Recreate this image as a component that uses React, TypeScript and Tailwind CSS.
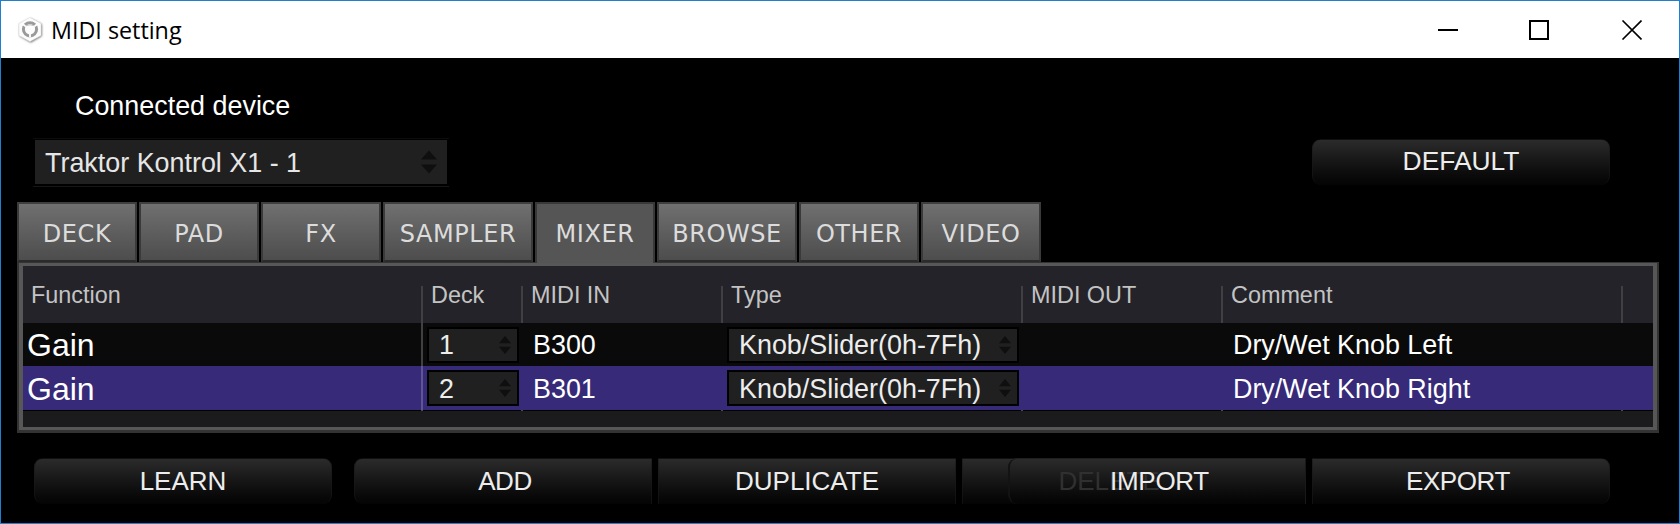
import React from "react";

const sans = "font-['Liberation_Sans',Arial,sans-serif]";

function AppIcon() {
  return (
    <svg width="30" height="30" viewBox="0 0 30 30" className="shrink-0">
      <defs>
        <filter id="soft" x="-20%" y="-20%" width="140%" height="140%">
          <feGaussianBlur stdDeviation="1.1" />
        </filter>
      </defs>
      <path d="M15.7 3.5 L26.7 9.3 V21 L15.7 27.5 L4.7 21 V9.3 Z" fill="#606060" filter="url(#soft)" />
      <path d="M15 2.5 L26 8.5 V20.5 L15 26.5 L4 20.5 V8.5 Z" fill="#fcfcfc" stroke="#e0e0e0" strokeWidth="0.6" />
      <circle cx="15" cy="14.3" r="6.6" fill="none" stroke="#9a9a9a" strokeWidth="3" />
      <path d="M15 14.5 L7.5 9 M15 14.5 L22.5 9 M15 14.5 V22.5" stroke="#fff" strokeWidth="1.8" />
      <path d="M10.2 10.8 Q15 8.6 19.8 10.8 Q19.6 17 15 19 Q10.4 17 10.2 10.8 Z" fill="#fdfdfd" />
      <path d="M10.5 10.8 Q15 8.8 19.5 10.8" fill="none" stroke="#bbb" strokeWidth="0.9" />
    </svg>
  );
}

function Arrows({ big = false }: { big?: boolean }) {
  return big ? (
    <svg width="16" height="24" viewBox="0 0 16 24" fill="#0f0f0f" className="shrink-0">
      <path d="M8 0.5 L16 9.5 H0 Z M8 23.5 L16 14.5 H0 Z" />
    </svg>
  ) : (
    <svg width="12" height="18" viewBox="0 0 12 18" fill="#0f0f0f" className="shrink-0">
      <path d="M6 0 L12 7.2 H0 Z M6 18 L12 10.8 H0 Z" />
    </svg>
  );
}

function Button({
  label,
  className = "",
  text = "text-[26px]",
  edge = "border-[#191919]/60",
}: {
  label: string;
  className?: string;
  text?: string;
  edge?: string;
}) {
  return (
    <button
      className={`flex h-[46px] w-[298px] shrink-0 items-center justify-center border border-b-0 bg-linear-to-b from-[#2b2b2b] to-[#040404] pb-0.5 leading-none text-[#ededed] ${edge} ${text} ${className}`}
    >
      {label}
    </button>
  );
}

const tabs = [
  { label: "DECK", size: "w-[120px]" },
  { label: "PAD", size: "w-[120px]" },
  { label: "FX", size: "w-[120px]" },
  { label: "SAMPLER", size: "w-[150px]" },
  { label: "MIXER", size: "w-[120px]" },
  { label: "BROWSE", size: "w-[140px]" },
  { label: "OTHER", size: "w-[120px]" },
  { label: "VIDEO", size: "w-[120px]" },
];

function Tab({ label, size, active }: { label: string; size: string; active: boolean }) {
  return (
    <div
      className={`flex items-center justify-center border-2 font-['DejaVu_Sans',Verdana,sans-serif] text-[24px] leading-none tracking-[0.55px] text-[#dcdcdc] ${size} ${
        active
          ? "z-10 h-[61px] border-b-0 border-[#383838] bg-[#555] pt-px"
          : "h-[60px] border-x-[#3a3a3a] border-t-[#3f3f3f] border-b-[#2b2b2b] bg-linear-to-b from-[#707070] to-[#4d4d4d] pt-1"
      }`}
    >
      {label}
    </div>
  );
}

const columns = [
  { label: "Function", size: "w-[400px] pl-[8px]" },
  { label: "Deck", size: "w-[100px] pl-[8px]" },
  { label: "MIDI IN", size: "w-[200px] pl-[8px]" },
  { label: "Type", size: "w-[300px] pl-[8px]" },
  { label: "MIDI OUT", size: "w-[200px] pl-[8px]" },
  { label: "Comment", size: "w-[400px] pl-[8px]" },
];

function Select({ value, size }: { value: string; size: string }) {
  return (
    <div
      className={`flex h-[36px] items-center justify-between border-2 border-black bg-[#202020] pl-[10px] pr-[6px] text-[#ededed] ${size}`}
    >
      <span className="pt-0.5">{value}</span>
      <Arrows />
    </div>
  );
}

function Row({ deck, midi, comment, selected }: { deck: string; midi: string; comment: string; selected: boolean }) {
  return (
    <div
      className={`flex items-center text-[26.9px] leading-none whitespace-nowrap text-white ${
        selected ? "h-[44px] bg-[#362a79]" : "h-[43px] bg-[#0a0a0a]"
      }`}
    >
      <div
        className={`flex h-full w-[400px] items-center border-r-2 pl-[4px] text-[32px] ${
          selected ? "border-[#5e5594] pt-0.5" : "border-[#404040]"
        }`}
      >
        Gain
      </div>
      <div className="w-[100px] pl-[4px]">
        <Select value={deck} size="w-[92px]" />
      </div>
      <div className="w-[200px] pt-0.5 pl-[10px]">{midi}</div>
      <div className="w-[300px] pl-[4px]">
        <Select value="Knob/Slider(0h-7Fh)" size="w-[292px]" />
      </div>
      <div className="w-[200px]" />
      <div className="w-[400px] pt-0.5 pl-[10px]">{comment}</div>
    </div>
  );
}

export default function App() {
  return (
    <div className={`flex h-[524px] w-[1680px] flex-col overflow-hidden border border-[#1f80cf] bg-black ${sans}`}>
      <header className="flex h-[57px] shrink-0 items-center bg-white pl-[14px] pr-[37px]">
        <AppIcon />
        <h1 className="ml-[6px] grow pt-0.5 font-['Open_Sans','Noto_Sans',sans-serif] text-[23.3px] leading-none font-normal text-black">
          MIDI setting
        </h1>
        <svg width="204" height="20" viewBox="0 0 204 20" fill="none" stroke="#000" strokeWidth="2">
          <path d="M0 10 H20" />
          <path d="M92 1 H110 V19 H92 Z" />
          <path d="M184.5 0.5 L203.5 19.5 M203.5 0.5 L184.5 19.5" strokeWidth="1.6" />
        </svg>
      </header>

      <section className="flex h-[143px] shrink-0 items-start justify-between pl-[32px] pr-[69px]">
        <div className="flex w-[416px] flex-col">
          <div className="mt-[33px] pl-[42px] text-[26.9px] leading-[30px] text-white">Connected device</div>
          <div className="mt-[17px] h-[49px] border-t border-b border-t-[#0c0c0c] border-b-[#161616] px-[2px] pt-[1px]">
            <div className="flex h-[44px] items-center justify-between bg-[#202020] pl-[10px] pr-[10px] text-[26.9px] leading-none text-[#e6e6e6]">
              <span className="pt-[3px]">Traktor Kontrol X1 - 1</span>
              <Arrows big />
            </div>
          </div>
        </div>
        <Button label="DEFAULT" text="text-[26.4px]" className="mt-[81px] rounded-[9px]" />
      </section>

      <nav className="mt-px ml-[16px] flex h-[60px] shrink-0 gap-[2px]">
        {tabs.map((t) => (
          <Tab key={t.label} label={t.label} size={t.size} active={t.label === "MIXER"} />
        ))}
      </nav>

      <main className="ml-[16px] h-[171px] w-[1642px] shrink-0 border-x-2 border-t border-b-[3px] border-[#333]">
        <div className="h-full overflow-hidden border-x-4 border-y-[3px] border-[#575757] bg-[#1b1b1d]">
          <div className="flex h-[57px] bg-[#242329] text-[23.4px] leading-[58px] text-[#c3c3c3]">
            {columns.map((c) => (
              <div key={c.label} className={`flex flex-none items-end justify-between ${c.size}`}>
                <span className="self-start">{c.label}</span>
                <span className="h-[37px] w-[2px] bg-[#404043]" />
              </div>
            ))}
          </div>
          <Row deck="1" midi="B300" comment="Dry/Wet Knob Left" selected={false} />
          <Row deck="2" midi="B301" comment="Dry/Wet Knob Right" selected />
          <div className="flex h-px bg-black">
            {columns.map((c) => (
              <div key={c.label} className={`flex flex-none justify-end ${c.size}`}>
                <span className="h-px w-[2px] bg-[#4c4c4c]" />
              </div>
            ))}
          </div>
        </div>
      </main>

      <footer className="mt-[25px] ml-[33px] flex shrink-0">
        <Button label="LEARN" className="rounded-[9px]" />
        <Button label="ADD" text="text-[26px] pl-[4px] tracking-[-0.4px]" className="ml-[22px] rounded-l-[9px]" />
        <Button label="DUPLICATE" className="ml-[6px]" />
        <div className="ml-[6px] grid w-[344px] shrink-0 grid-cols-1">
          <Button label="" className="col-start-1 row-start-1 rounded-r-[9px]" />
          <Button
            label=""
            edge="border-t-[#1f1f1f] border-r-[#191919] border-l-2 border-l-[#131313]"
            className="col-start-1 row-start-1 justify-self-end rounded-l-[9px]"
          />
          <div className="col-start-1 row-start-1 flex w-[298px] items-center justify-center pr-[4px] text-[26px] leading-none text-[#303030]">
            DELETE
          </div>
          <div className="col-start-1 row-start-1 flex w-[298px] items-center justify-center justify-self-end pl-[5px] text-[26px] leading-none tracking-[-0.3px] text-[#ededed]">
            IMPORT
          </div>
        </div>
        <Button label="EXPORT" text="text-[26px] pr-[6px] tracking-[-0.4px]" className="ml-[6px] rounded-r-[9px]" />
      </footer>
    </div>
  );
}
